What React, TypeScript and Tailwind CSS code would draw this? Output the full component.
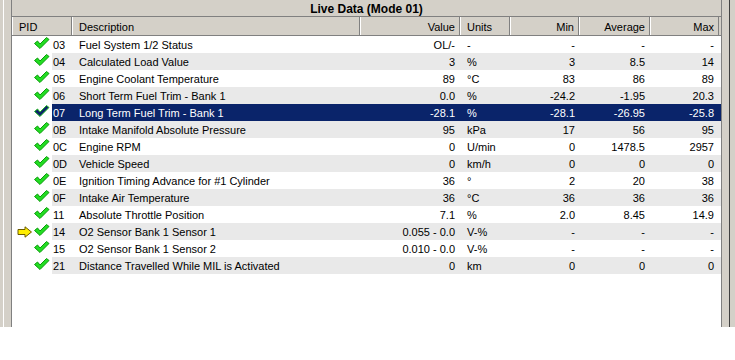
const rows = [
    ["03", "Fuel System 1/2 Status", "OL/-", "-", "-", "-", "-"],
    ["04", "Calculated Load Value", "3", "%", "3", "8.5", "14"],
    ["05", "Engine Coolant Temperature", "89", "°C", "83", "86", "89"],
    ["06", "Short Term Fuel Trim - Bank 1", "0.0", "%", "-24.2", "-1.95", "20.3"],
    ["07", "Long Term Fuel Trim - Bank 1", "-28.1", "%", "-28.1", "-26.95", "-25.8"],
    ["0B", "Intake Manifold Absolute Pressure", "95", "kPa", "17", "56", "95"],
    ["0C", "Engine RPM", "0", "U/min", "0", "1478.5", "2957"],
    ["0D", "Vehicle Speed", "0", "km/h", "0", "0", "0"],
    ["0E", "Ignition Timing Advance for #1 Cylinder", "36", "°", "2", "20", "38"],
    ["0F", "Intake Air Temperature", "36", "°C", "36", "36", "36"],
    ["11", "Absolute Throttle Position", "7.1", "%", "2.0", "8.45", "14.9"],
    ["14", "O2 Sensor Bank 1 Sensor 1", "0.055 - 0.0", "V-%", "-", "-", "-"],
    ["15", "O2 Sensor Bank 1 Sensor 2", "0.010 - 0.0", "V-%", "-", "-", "-"],
    ["21", "Distance Travelled While MIL is Activated", "0", "km", "0", "0", "0"],
];

const SELECTED = "07";
const ARROW = "14";

const Check = ({dark}: {dark?: boolean}) => (
    <svg width="16" height="13" viewBox="0 0 16 13">
        <path
            d="M0.5 6.5 L3.5 4 L6 7 L12.5 0.5 L15 2.5 L6 11.5 Z"
            fill={dark ? "#0a246a" : "#22dd22"}
            stroke={dark ? "#22bb22" : "#0b9a0b"}
            strokeWidth="1"
            strokeLinejoin="round"
        />
    </svg>
);

const Arrow = () => (
    <svg width="16" height="12" viewBox="0 0 16 12">
        <path
            d="M1 3.5 L8 3.5 L8 0.8 L14.5 6 L8 11.2 L8 8.5 L1 8.5 Z"
            fill="#ffee00"
            stroke="#6b5a00"
            strokeWidth="1"
            strokeLinejoin="round"
        />
    </svg>
);

const HeaderCell = ({label, w, right}: {label: string; w: string; right?: boolean}) => (
    <div className={`${w} h-full flex items-center pt-[2px] border-l border-l-white border-r border-r-[#808080] ${right ? "justify-end pr-[4px]" : "pl-[6px]"}`}>
        {label}
    </div>
);

const App = () => {
    return (
        <div className="w-[735px] h-[360px] bg-white" style={{fontFamily: '"Liberation Sans", Arial, sans-serif'}}>
            <div className="flex h-[327px] bg-[#d4d0c8] text-[11px] text-black">
                {/* left frame */}
                <div className="w-[3px]" />
                <div className="w-px bg-white" />
                <div className="w-[7px]" />
                <div className="w-px bg-[#808080]" />

                {/* list panel */}
                <div className="w-[709px] flex flex-col">
                    <div className="h-[17px] border-b border-[#808080] flex items-center justify-center pt-[1px] font-bold text-[12px] leading-none">
                        Live Data (Mode 01)
                    </div>
                    <div className="h-[19px] flex border-b border-[#808080] leading-none">
                        <HeaderCell label="PID" w="w-[60px]" />
                        <HeaderCell label="Description" w="w-[288px]" />
                        <HeaderCell label="Value" w="w-[100px]" right />
                        <HeaderCell label="Units" w="w-[50px]" />
                        <HeaderCell label="Min" w="w-[69px]" right />
                        <HeaderCell label="Average" w="w-[71px]" right />
                        <HeaderCell label="Max" w="w-[69px]" right />
                        <div className="w-px" />
                    </div>
                    <div className="flex-1 bg-white">
                        {rows.map((r, i) => {
                            const selected = r[0] === SELECTED;
                            const bg = selected ? "bg-[#0a246a] text-white" : i % 2 === 1 ? "bg-[#e9e9e9]" : "bg-white";
                            return (
                                <div key={r[0]} className="flex h-[17px] leading-[18px]">
                                    <div className="w-[40px] flex items-center">
                                        <div className="w-[22px] pl-[5px] flex items-center">
                                            {r[0] === ARROW && <Arrow />}
                                        </div>
                                        <div className="w-[18px] flex items-center -mt-[3px]">
                                            <Check dark={selected} />
                                        </div>
                                    </div>
                                    <div className={`flex flex-1 ${bg}`}>
                                        <div className="w-[20px] pl-[1px]">{r[0]}</div>
                                        <div className="w-[288px] pl-[7px] whitespace-nowrap">{r[1]}</div>
                                        <div className="w-[100px] text-right pr-[5px]">{r[2]}</div>
                                        <div className="w-[50px] pl-[7px]">{r[3]}</div>
                                        <div className="w-[69px] text-right pr-[4px]">{r[4]}</div>
                                        <div className="w-[71px] text-right pr-[5px]">{r[5]}</div>
                                        <div className="w-[69px] text-right pr-[5px]">{r[6]}</div>
                                    </div>
                                </div>
                            );
                        })}
                    </div>
                </div>

                {/* right frame */}
                <div className="w-px bg-[#808080]" />
                <div className="w-[7px]" />
                <div className="w-px bg-[#404040]" />
                <div className="w-[5px]" />
            </div>
        </div>
    );
};

export default App;
